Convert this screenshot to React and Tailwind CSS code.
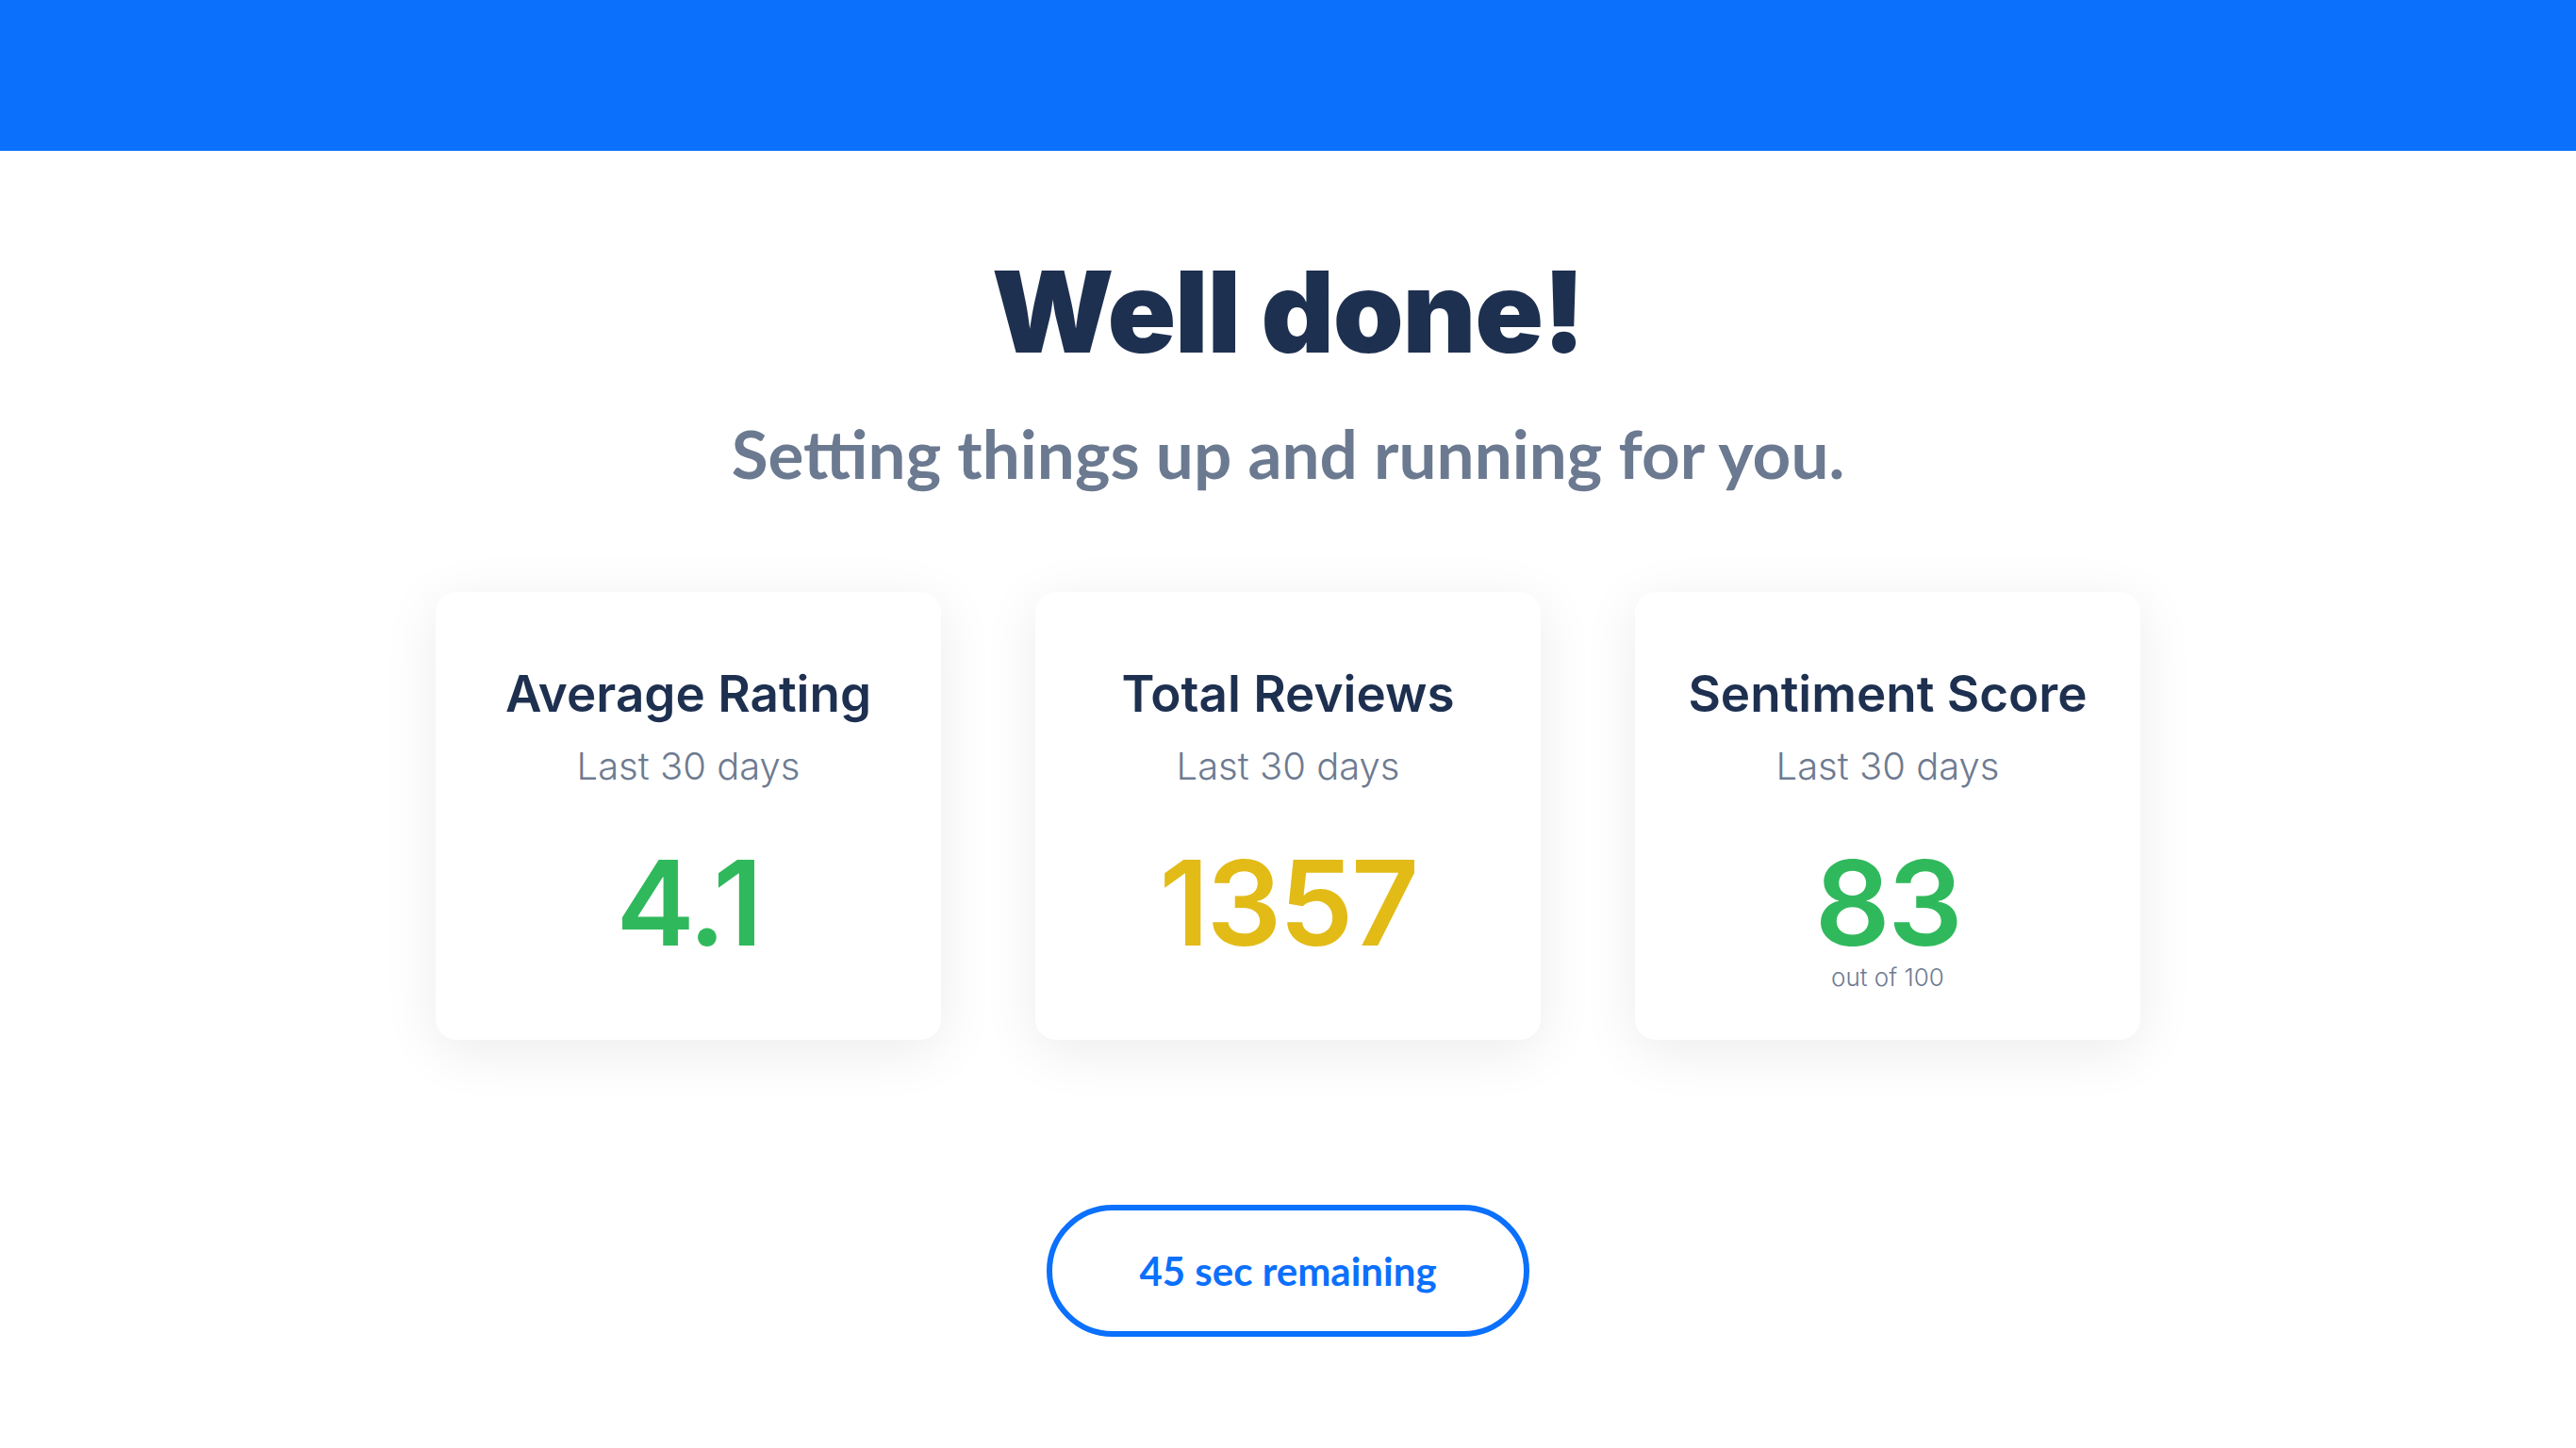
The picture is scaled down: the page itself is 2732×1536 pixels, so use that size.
const stats = [
  { title: 'Average Rating', value: '4.1', color: 'text-[#30b95c]' },
  { title: 'Total Reviews', value: '1357', color: 'text-[#e2bb17]' },
  { title: 'Sentiment Score', value: '83', color: 'text-[#30b95c]', note: 'out of 100' },
];

function StatCard({ title, value, color, note }) {
  return (
    <div className="flex h-[475px] w-[536px] flex-col items-center rounded-[22px] bg-white pt-[82px] shadow-[0_12px_60px_rgba(0,0,0,0.08)]">
      <h2 className="font-['Inter',sans-serif] text-[53px] font-semibold leading-none text-[#1e3050]">
        {title}
      </h2>
      <p className="mt-[30px] font-['Inter',sans-serif] text-[40px] font-light leading-none text-[#6e7b91]">
        Last 30 days
      </p>
      <p className={`mt-[62px] font-['Inter',sans-serif] text-[125px] font-semibold leading-none tracking-[-0.02em] ${color}`}>
        {value}
      </p>
      {note && (
        <p className="mt-[4px] font-['Inter',sans-serif] text-[26px] font-light leading-none text-[#6e7b91]">{note}</p>
      )}
    </div>
  );
}

export default function App() {
  return (
    <div className="min-h-[1536px] bg-white">
      <header className="h-[160px] w-full bg-[#0b70fc]" />

      <main className="flex flex-col items-center">
        <h1 className="mt-[111px] font-['Inter',sans-serif] text-[120px] font-black leading-none tracking-[-0.01em] text-[#1e3050]">
          Well done!
        </h1>
        <p className="mt-[54px] font-['Lato',sans-serif] text-[71px] font-bold leading-none text-[#6b7a90]">
          Setting things up and running for you.
        </p>

        <div className="mt-[112px] flex gap-[100px]">
          {stats.map((item) => (
            <StatCard key={item.title} {...item} />
          ))}
        </div>

        <button
          type="button"
          className="mt-[175px] flex h-[140px] w-[512px] items-center justify-center rounded-full border-[6px] border-[#0b70fc] bg-white font-['Lato',sans-serif] text-[42px] font-bold text-[#0b70fc]"
        >
          45 sec remaining
        </button>
      </main>
    </div>
  );
}
